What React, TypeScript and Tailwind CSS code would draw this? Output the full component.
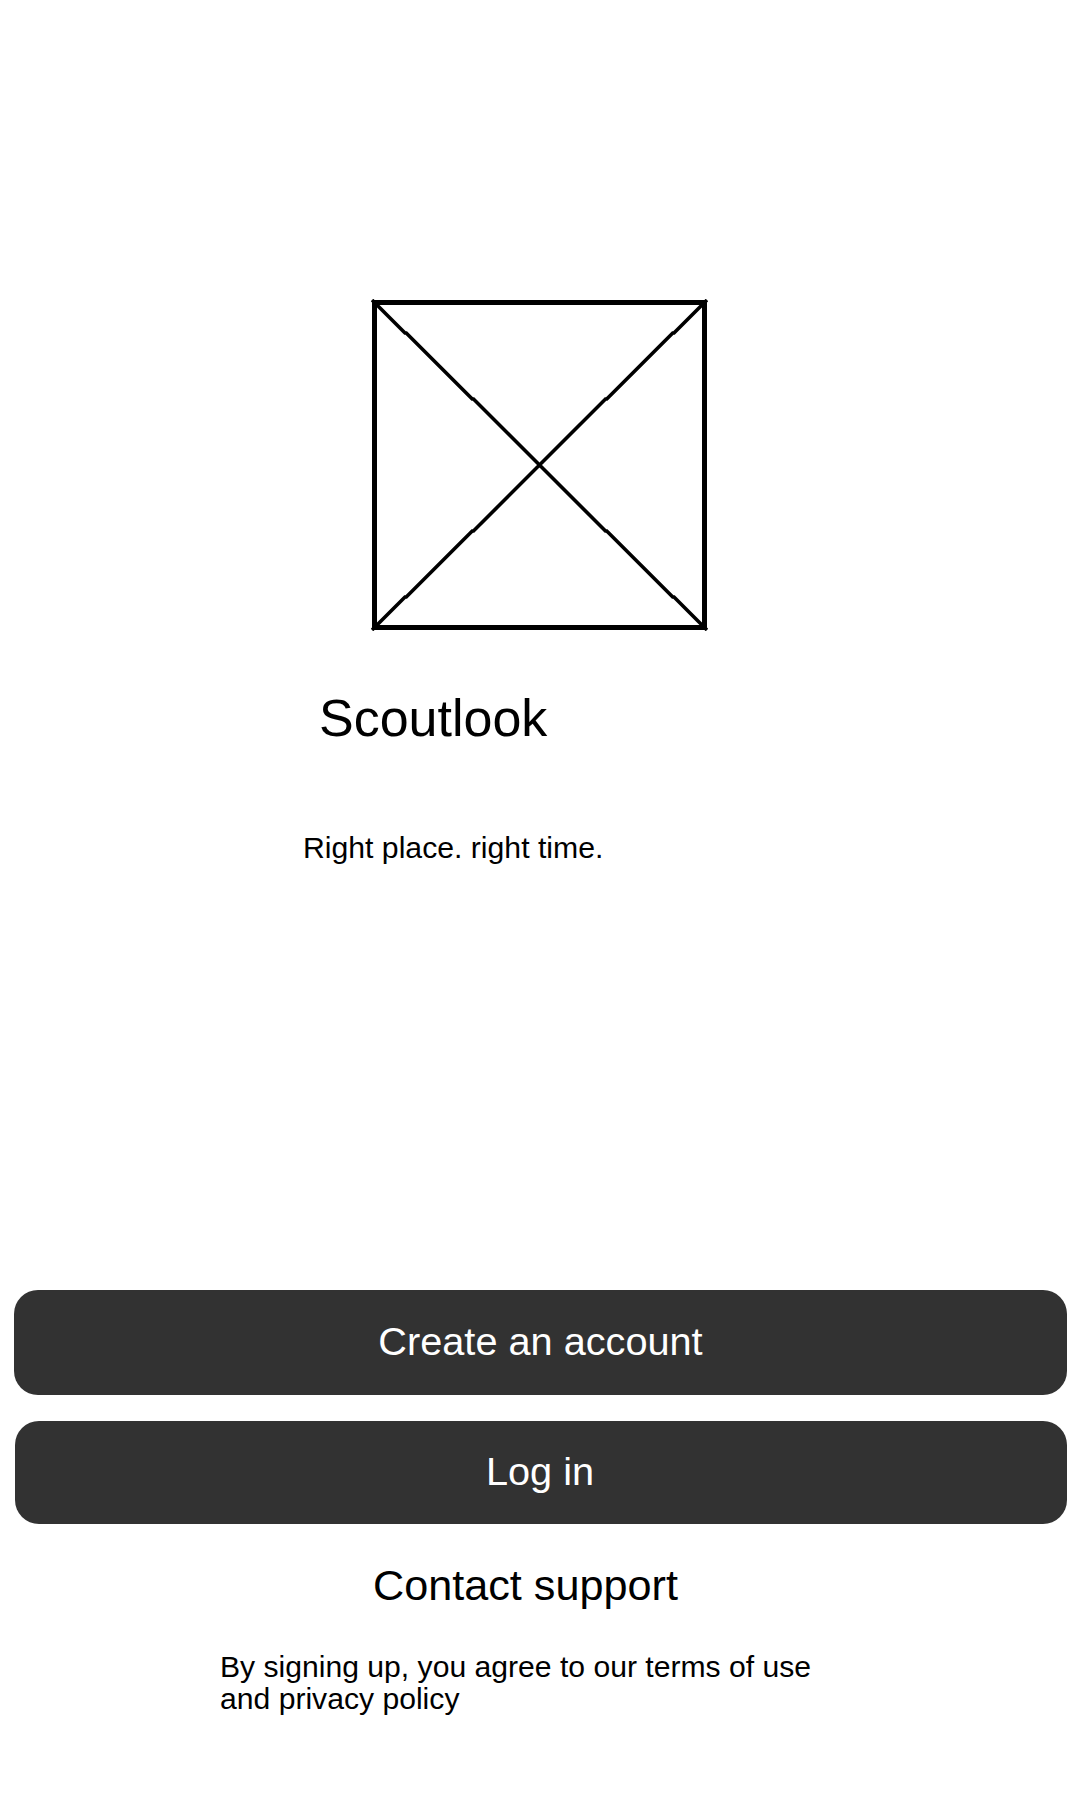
export default function App() {
  return (
    <main className="flex h-[1800px] w-[1080px] flex-col items-start overflow-hidden bg-white pt-[299px] font-['Liberation_Sans',Arial,sans-serif] text-black">
      <svg
        className="ml-[371px] block h-[332px] w-[337px] shrink-0"
        viewBox="0 0 337 332"
        fill="none"
        stroke="black"
        role="img"
        aria-label="Logo placeholder"
      >
        <rect x="3.5" y="3.5" width="330" height="325" strokeWidth="5" />
        <path
          d="M1 1l33 33h1.25l66 66h1.25l132 132h1.25l66 66h1.25l33 33M336 1l-33 33h-1.25l-66 66h-1.25l-132 132h-1.25l-66 66h-1.25l-33 33"
          strokeWidth="3.6"
        />
      </svg>
      <h1 className="mt-[57px] ml-[319px] text-[52px] leading-[60px] whitespace-nowrap">Scoutlook</h1>
      <p className="mt-[84px] ml-[303px] text-[30.2px] leading-[32px] whitespace-nowrap">Right place. right time.</p>
      <button className="mt-[426px] ml-[14px] flex h-[105px] w-[1053px] items-center justify-center rounded-[24px] bg-[#323232] pb-px text-[39.7px] text-white">
        Create an account
      </button>
      <button className="mt-[26px] ml-[15px] flex h-[103px] w-[1052px] items-center justify-center rounded-[24px] bg-[#323232] pr-[2px] pb-px text-[39.7px] text-white">
        Log in
      </button>
      <a href="#support" className="mt-[37px] ml-[373px] text-[43.2px] leading-[48px] whitespace-nowrap">
        Contact support
      </a>
      <p className="mt-[42px] ml-[220px] text-[30.13px] leading-[32px] whitespace-nowrap">
        By signing up, you agree to our terms of use
        <br />
        and privacy policy
      </p>
    </main>
  );
}
